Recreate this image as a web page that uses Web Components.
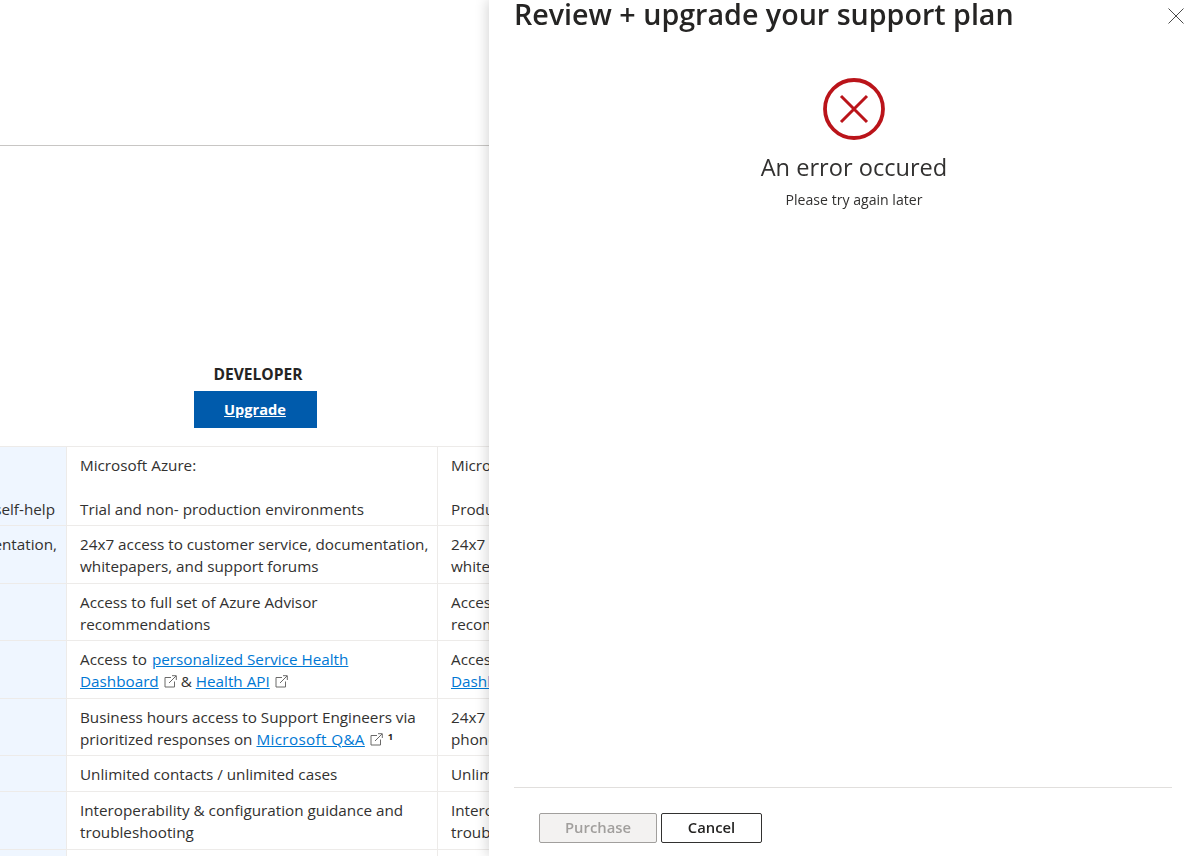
<!DOCTYPE html>
<html lang="en">
<head>
<meta charset="utf-8">
<title>Review + upgrade your support plan</title>
<style>
  html, body { margin: 0; height: 100%; overflow: hidden; background: #fff; }
  body { font-family: "Open Sans", "Noto Sans", sans-serif; color: #323130; }
</style>
</head>
<body>
<plan-page>
  <plan-row>
    <span slot="side"><br><br>Access to self-help</span>
    Microsoft Azure:<br><br>Trial and non- production environments
    <span slot="next">Microsoft Azure:<br><br>Production workload environments</span>
  </plan-row>
  <plan-row>
    <span slot="side" style="margin-right:-2px">documentation,</span>
    24x7 access to customer service, documentation,<br>whitepapers, and support forums
    <span slot="next">24x7<br>whitepapers, and support forums</span>
  </plan-row>
  <plan-row>
    Access to full set of Azure Advisor<br>recommendations
    <span slot="next">Access to full set of Azure Advisor<br>recommendations</span>
  </plan-row>
  <plan-row>
    <span style="word-spacing:1px">Access to </span><ext-link>personalized Service Health<br>Dashboard</ext-link> &amp; <ext-link>Health API</ext-link>
    <span slot="next">Access to <ext-link>personalized Service Health<br>Dashboard</ext-link></span>
  </plan-row>
  <plan-row>
    Business hours access to Support Engineers via<br>prioritized responses on <ext-link style="letter-spacing:.35px">Microsoft Q&amp;A</ext-link> <sup-note>1</sup-note>
    <span slot="next">24x7<br>phone and email</span>
  </plan-row>
  <plan-row>
    Unlimited contacts / unlimited cases
    <span slot="next">Unlimited contacts / unlimited cases</span>
  </plan-row>
  <plan-row>
    Interoperability &amp; configuration guidance and<br>troubleshooting
    <span slot="next">Interoperability &amp; configuration guidance and<br>troubleshooting</span>
  </plan-row>
  <plan-row></plan-row>
</plan-page>
<review-panel></review-panel>

<script>
class PlanPage extends HTMLElement {
  connectedCallback() {
    this.attachShadow({ mode: 'open' });
    this.shadowRoot.innerHTML = `
      <style>
        :host { display: block; height: 856px; overflow: hidden; }
        .top { height: 145px; border-bottom: 1px solid #c8c6c4; width: 489px; }
        .plan { width: 370px; margin-left: 70px; padding-top: 218px; text-align: center; }
        h2 { margin: 0 0 1px; padding-left: 6px; font-size: 15.6px; line-height: 20px; font-weight: 700; color: #252423; }
        .btn { display: inline-block; width: 123px; height: 37px; line-height: 37px; margin: 6px 0 18px; background: #005bac;
               color: #fff; font-size: 14.6px; font-weight: 700; text-decoration: underline; }
        .rows { border-top: 1px solid #edebe9; }
      </style>
      <div class="top"></div>
      <div class="plan">
        <h2>DEVELOPER</h2>
        <a class="btn">Upgrade</a>
      </div>
      <div class="rows"><slot></slot></div>`;
  }
}

class PlanRow extends HTMLElement {
  connectedCallback() {
    this.attachShadow({ mode: 'open' });
    this.shadowRoot.innerHTML = `
      <style>
        :host { display: grid; grid-template-columns: 66px 371px 370px; border-bottom: 1px solid #edebe9;
                font-size: 15.25px; line-height: 21.75px; color: #323130; }
        .side { background: #eff6ff; padding: 8px 11px 5px 0; display: flex; justify-content: flex-end; white-space: nowrap; overflow: hidden; }
        .cell { padding: 8px 0 5px 13px; border-left: 1px solid #edebe9; white-space: nowrap; overflow: hidden; }
      </style>
      <div class="side"><slot name="side"></slot></div>
      <div class="cell"><slot></slot></div>
      <div class="cell"><slot name="next"></slot></div>`;
  }
}

class ExtLink extends HTMLElement {
  connectedCallback() {
    this.attachShadow({ mode: 'open' });
    this.shadowRoot.innerHTML = `
      <style>
        :host { display: inline; }
        a { color: #0078d4; text-decoration: underline; }
        svg { width: 13px; height: 13px; margin-left: 5px; vertical-align: -1px; }
      </style>
      <a><slot></slot></a><svg viewBox="0 0 13 13" fill="none" stroke="#6b6a69" stroke-width="1">
        <path d="M7 2.5H1V12H10.5V6.5"/><path d="M5 8L12 1M8 .7H12.3V5"/>
      </svg>`;
  }
}

class SupNote extends HTMLElement {
  connectedCallback() {
    this.attachShadow({ mode: 'open' });
    this.shadowRoot.innerHTML = `
      <style>:host { font-size: 9.5px; font-weight: 700; vertical-align: 5px; line-height: 0; color: #252423; margin-left: 1px; }</style>
      <slot></slot>`;
  }
}

class ReviewPanel extends HTMLElement {
  connectedCallback() {
    this.attachShadow({ mode: 'open' });
    this.shadowRoot.innerHTML = `
      <style>
        :host { position: fixed; top: 0; right: 0; bottom: 0; width: 702px; background: #fff;
                box-shadow: -2px 0 12px rgba(0,0,0,.16); display: flex; flex-direction: column; color: #252423; }
        header { display: flex; justify-content: space-between; padding: 0 7px 0 25px; height: 78px; }
        h1 { margin: 0; font-size: 28.65px; line-height: 28px; font-weight: 600; white-space: nowrap; }
        .close { margin-top: 8px; width: 16px; height: 16px; }
        main { flex: 1; text-align: center; padding-left: 28px; }
        main svg { display: block; margin: 0 auto; width: 62px; height: 62px; }
        h3 { margin: 11px 0 0; font-size: 23.6px; line-height: 32px; font-weight: 400; color: #323130; }
        p { margin: 8px 0 0; font-size: 14.1px; line-height: 18px; color: #323130; }
        footer { margin: 0 19px 0 25px; border-top: 1px solid #e1dfdd; padding: 25px 0 13px 25px; display: flex; gap: 4px; }
        button { height: 30px; box-sizing: border-box; border-radius: 2px; font: 600 14.8px/26px "Open Sans", "Noto Sans", sans-serif; padding: 0 0 2px; background: #fff; border: 1px solid #323130; color: #252423; width: 101px; }
        button[disabled] { width: 118px; background: #f3f2f1; border-color: #a19f9d; color: #a19f9d; }
      </style>
      <header>
        <h1>Review + upgrade your support plan</h1>
        <svg class="close" viewBox="0 0 16 16" stroke="#4a4a4a" stroke-width="1" fill="none"><path d="M.5 .5L15.5 15.5M15.5 .5L.5 15.5"/></svg>
      </header>
      <main>
        <svg viewBox="0 0 62 62" fill="none" stroke="#ba141a">
          <circle cx="31" cy="31" r="29" stroke-width="3.8"/>
          <path d="M18 18L44 44M44 18L18 44" stroke-width="3"/>
        </svg>
        <h3>An error occured</h3>
        <p>Please try again later</p>
      </main>
      <footer>
        <button disabled>Purchase</button>
        <button>Cancel</button>
      </footer>`;
  }
}

customElements.define('plan-page', PlanPage);
customElements.define('plan-row', PlanRow);
customElements.define('ext-link', ExtLink);
customElements.define('sup-note', SupNote);
customElements.define('review-panel', ReviewPanel);
</script>
</body>
</html>
